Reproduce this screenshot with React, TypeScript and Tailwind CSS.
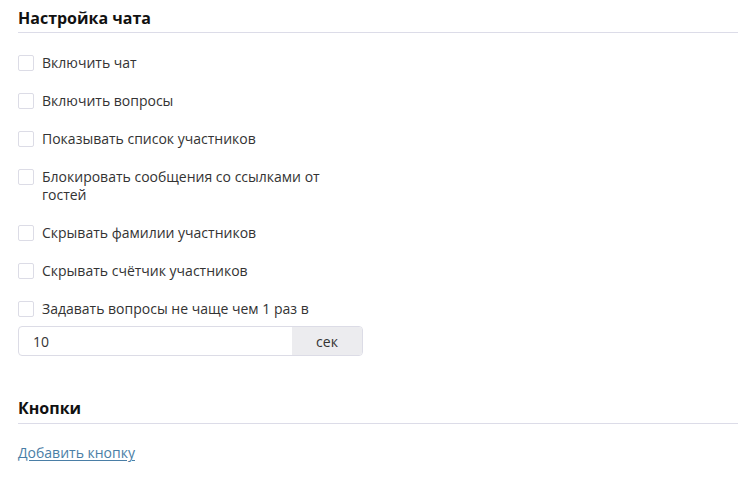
import { useState } from "react";

const options = [
  "Включить чат",
  "Включить вопросы",
  "Показывать список участников",
  "Блокировать сообщения со ссылками от гостей",
  "Скрывать фамилии участников",
  "Скрывать счётчик участников",
  "Задавать вопросы не чаще чем 1 раз в",
];

export default function App() {
  const [checked, setChecked] = useState<boolean[]>(options.map(() => false));
  const [interval, setInterval] = useState("10");

  return (
    <main
      className="min-h-screen bg-white pl-[18px] pr-[13px] text-[14px] text-[#333]"
      style={{ fontFamily: '"Open Sans", "Liberation Sans", sans-serif' }}
    >
      <h2 className="border-b border-[#dcdce8] pt-[7px] pb-[3px] text-[16px] font-bold leading-[22px] text-[#111]">
        Настройка чата
      </h2>

      <div className="mt-[21px] flex w-[345px] flex-col gap-[20px]">
        {options.map((label, i) => (
          <label key={label} className="flex cursor-pointer items-start gap-[8px] leading-[18px]">
            <input
              type="checkbox"
              checked={checked[i]}
              onChange={() => setChecked(checked.map((c, j) => (j === i ? !c : c)))}
              className="mt-px h-[16px] w-[16px] shrink-0 appearance-none rounded-[2px] border border-[#dcdce6] bg-white"
            />
            <span>{label}</span>
          </label>
        ))}
      </div>

      <div className="mt-[8px] flex h-[30px] w-[345px] overflow-hidden rounded-[4px] border border-[#dcdce6]">
        <input
          value={interval}
          onChange={(e) => setInterval(e.target.value)}
          className="min-w-0 flex-1 px-[14px] outline-none"
        />
        <span className="flex w-[70px] items-center justify-center bg-[#ececef]">сек</span>
      </div>

      <h2 className="mt-[41px] border-b border-[#dcdce8] pb-[4px] text-[16px] font-bold leading-[22px] text-[#111]">
        Кнопки
      </h2>

      <a href="#" className="mt-[20px] inline-block leading-[18px] text-[#4a7ea6] underline underline-offset-2">
        Добавить кнопку
      </a>
    </main>
  );
}
